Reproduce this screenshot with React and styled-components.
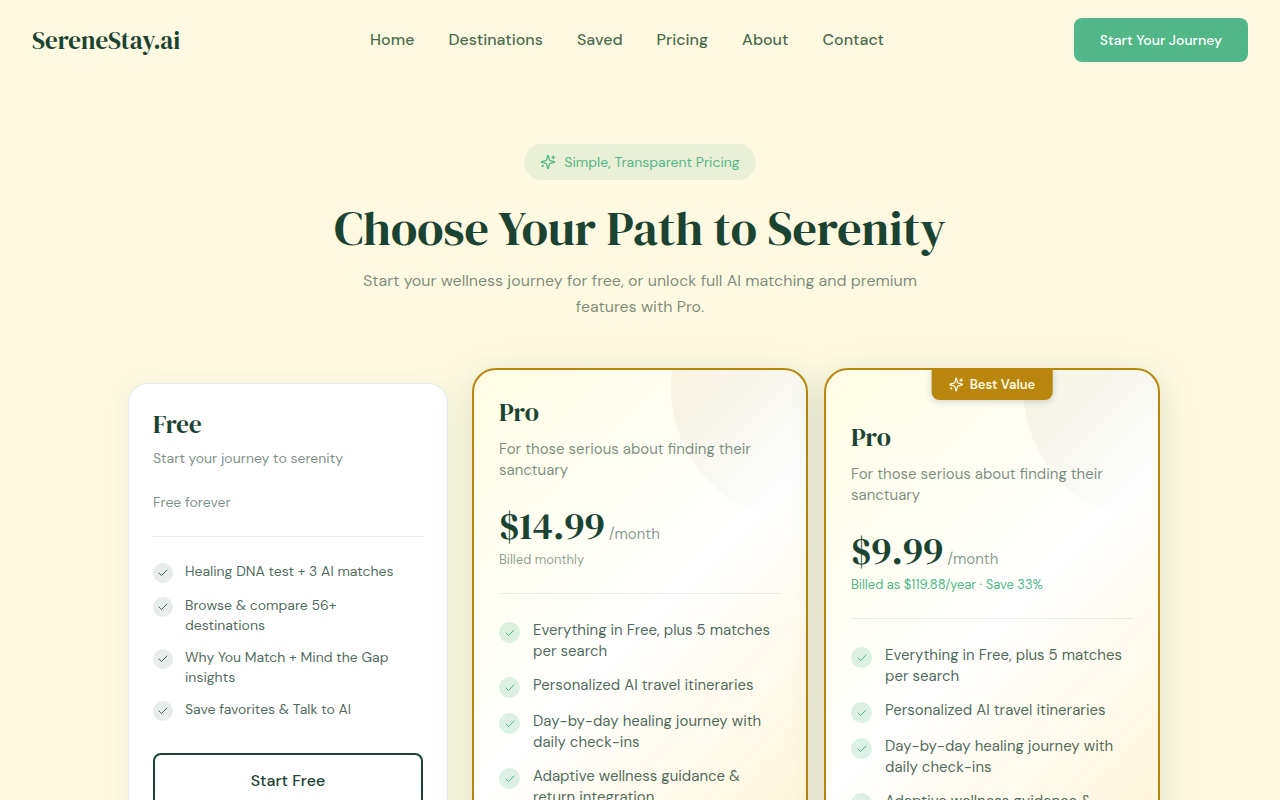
import React from 'react';
import styled, { createGlobalStyle, css } from 'styled-components';
import { Check } from 'lucide-react';

const sans = `'DM Sans', Inter, 'Open Sans', sans-serif`;
const serif = `'DM Serif Display', 'Liberation Serif', serif`;

const GlobalStyle = createGlobalStyle`
  *, *::before, *::after {
    box-sizing: border-box;
  }
  body {
    margin: 0;
    background: #fff9e1;
    color: #1b4332;
    font-family: ${sans};
    font-size: 16px;
  }
`;

const Header = styled.header`
  display: flex;
  align-items: center;
  justify-content: space-between;
  height: 80px;
  padding: 0 32px;
`;

const Logo = styled.a`
  color: #1b4332;
  font-family: ${serif};
  font-size: 25px;
  line-height: 32px;
  text-decoration: none;
`;

const Nav = styled.nav`
  display: flex;
  gap: 34px;
`;

const NavLink = styled.a`
  color: rgba(27, 73, 42, 0.82);
  font-weight: 500;
  line-height: 24px;
  text-decoration: none;
`;

const HeaderButton = styled.button`
  height: 44px;
  padding: 0 26px;
  border: 0;
  border-radius: 8px;
  background: #52b788;
  color: #fff;
  font: 500 14px ${sans};
  cursor: pointer;
`;

const Main = styled.main`
  padding: 64px 32px;
`;

const Hero = styled.section`
  display: flex;
  flex-direction: column;
  align-items: center;
  margin-bottom: 63px;
  text-align: center;
`;

const Pill = styled.div`
  display: flex;
  align-items: center;
  gap: 8px;
  margin-bottom: 24px;
  padding: 8px 16px;
  border-radius: 18px;
  background: rgba(82, 183, 136, 0.12);
  color: #52b788;
  font-size: 14px;
  line-height: 20px;
`;

const Title = styled.h1`
  margin: 0 0 16px;
  font-family: ${serif};
  font-size: 48px;
  font-weight: 400;
  line-height: 48px;
`;

const Lead = styled.p`
  max-width: 576px;
  margin: 0;
  color: rgba(27, 67, 50, 0.6);
  font-size: 16px;
  line-height: 26px;
`;

const Plans = styled.section`
  display: grid;
  grid-template-columns: repeat(3, minmax(0, 1fr));
  gap: 32px;
  max-width: 1024px;
  margin: 0 auto;
`;

const Card = styled.article`
  padding: 24px;
  border: 1px solid rgba(27, 67, 50, 0.1);
  border-radius: 20px;
  background: #fff;
  box-shadow: 0 4px 24px rgba(82, 183, 136, 0.12);

  ${p =>
    p.$featured &&
    css`
      position: relative;
      overflow: hidden;
      margin: -15px -8px;
      padding: ${p.$badged ? '50px' : '25px'} 25px 24px;
      border: 2px solid #b8860b;
      border-radius: 24px;
      background: linear-gradient(135deg, #fffde4 0%, #fff 50%, #fff3d2 100%);
      box-shadow: 0 8px 36px rgba(45, 106, 79, 0.18);
    `}
`;

const Glow = styled.div`
  position: absolute;
  top: -116px;
  right: -133px;
  width: 268px;
  height: 268px;
  border-radius: 50%;
  background: linear-gradient(
    135deg,
    ${p => (p.$muted ? 'rgba(120, 105, 40, 0.1)' : 'rgba(184, 120, 40, 0.12)')},
    rgba(120, 105, 80, 0.04) 50%,
    rgba(120, 105, 80, 0) 70%
  );
`;

const Ribbon = styled.div`
  position: absolute;
  top: -1px;
  left: 50%;
  transform: translateX(-50%);
  display: flex;
  align-items: center;
  gap: 6px;
  height: 31px;
  padding: 0 17px;
  border-radius: 0 0 8px 8px;
  background: #b8860b;
  box-shadow: 0 2px 6px rgba(27, 67, 50, 0.2);
  color: #fff8e1;
  font-size: 13px;
  font-weight: 600;
  white-space: nowrap;
`;

const CardBody = styled.div`
  position: relative;
`;

const PlanName = styled.h2`
  margin: 0 0 ${p => (p.$featured ? '10px' : '8px')};
  font-family: ${serif};
  font-size: ${p => (p.$featured ? '26px' : '25px')};
  font-weight: 400;
  line-height: ${p => (p.$featured ? '34px' : '32px')};
`;

const Muted = styled.p`
  margin: 0 0 24px;
  color: rgba(27, 67, 50, 0.6);
  font-size: ${p => (p.$featured ? '15px' : '14px')};
  line-height: ${p => (p.$featured ? '21px' : '20px')};
`;

const Price = styled.div`
  display: flex;
  align-items: baseline;
  gap: 4px;
  height: 46px;
  color: rgba(27, 67, 50, 0.55);
  font-size: 15px;
  line-height: 42px;
`;

const Amount = styled.strong`
  color: #1b4332;
  font-family: ${serif};
  font-size: 38px;
  font-weight: 400;
`;

const Billing = styled.p`
  margin: 0 0 25px;
  color: ${p => (p.$saving ? '#52b788' : 'rgba(27, 67, 50, 0.5)')};
  font-size: 13px;
  line-height: 17px;
`;

const Divider = styled.hr`
  height: 1px;
  margin: 0;
  border: 0;
  background: rgba(27, 67, 50, 0.1);
`;

const Features = styled.ul`
  display: flex;
  flex-direction: column;
  gap: ${p => (p.$featured ? '13px' : '12px')};
  margin: 0;
  padding: ${p => (p.$featured ? '26px' : '24px')} 8px 32px 0;
  list-style: none;
`;

const Feature = styled.li`
  display: flex;
  align-items: flex-start;
  gap: ${p => (p.$featured ? '13px' : '12px')};
  color: rgba(27, 67, 50, 0.8);
  font-size: ${p => (p.$featured ? '15px' : '14px')};
  line-height: ${p => (p.$featured ? '21px' : '20px')};
`;

const Tick = styled.span`
  display: flex;
  flex: none;
  align-items: center;
  justify-content: center;
  width: ${p => (p.$featured ? '21px' : '20px')};
  height: ${p => (p.$featured ? '21px' : '20px')};
  margin-top: 2px;
  border-radius: 50%;
  background: ${p => (p.$featured ? 'rgba(82, 183, 136, 0.2)' : 'rgba(27, 67, 50, 0.1)')};
  color: ${p => (p.$featured ? '#52b788' : '#1b4332')};
`;

const PlanButton = styled.button`
  width: 100%;
  height: 54px;
  border: 2px solid #1b4332;
  border-radius: 8px;
  background: transparent;
  color: #1b4332;
  font: 500 16px ${sans};
  cursor: pointer;
`;

const links = ['Home', 'Destinations', 'Saved', 'Pricing', 'About', 'Contact'];

const freeFeatures = [
  'Healing DNA test + 3 AI matches',
  'Browse & compare 56+ destinations',
  'Why You Match + Mind the Gap insights',
  'Save favorites & Talk to AI'
];

const proFeatures = [
  'Everything in Free, plus 5 matches per search',
  'Personalized AI travel itineraries',
  'Day-by-day healing journey with daily check-ins',
  'Adaptive wellness guidance & return integration'
];

const Sparkles = ({ size }) => (
  <svg
    width={size}
    height={size}
    viewBox="0 0 24 24"
    fill="none"
    stroke="currentColor"
    strokeWidth="2"
    strokeLinecap="round"
    strokeLinejoin="round"
    aria-hidden="true"
  >
    <path d="M9.937 15.5A2 2 0 0 0 8.5 14.063l-6.135-1.582a.5.5 0 0 1 0-.962L8.5 9.936A2 2 0 0 0 9.937 8.5l1.582-6.135a.5.5 0 0 1 .963 0L14.063 8.5A2 2 0 0 0 15.5 9.937l6.135 1.581a.5.5 0 0 1 0 .964L15.5 14.063a2 2 0 0 0-1.437 1.437l-1.582 6.135a.5.5 0 0 1-.963 0z" />
    <path d="M20 3v4M22 5h-4M4 17v2M5 18H3" />
  </svg>
);

const FeatureList = ({ items, featured }) => (
  <Features $featured={featured}>
    {items.map(item => (
      <Feature key={item} $featured={featured}>
        <Tick $featured={featured}>
          <Check size={12} strokeWidth={featured ? 2 : 1.6} />
        </Tick>
        {item}
      </Feature>
    ))}
  </Features>
);

const ProCard = ({ price, billing, bestValue }) => (
  <Card $featured $badged={bestValue}>
    <Glow $muted={bestValue} />
    {bestValue && (
      <Ribbon>
        <Sparkles size={15} />
        Best Value
      </Ribbon>
    )}
    <CardBody>
      <PlanName $featured>Pro</PlanName>
      <Muted $featured>For those serious about finding their sanctuary</Muted>
      <Price>
        <Amount>{price}</Amount>
        <span>/month</span>
      </Price>
      <Billing $saving={bestValue}>{billing}</Billing>
      <Divider />
      <FeatureList items={proFeatures} featured />
    </CardBody>
  </Card>
);

export default function App() {
  return (
    <>
      <GlobalStyle />
      <Header>
        <Logo href="#">SereneStay.ai</Logo>
        <Nav>
          {links.map(link => (
            <NavLink key={link} href={`#${link.toLowerCase()}`}>
              {link}
            </NavLink>
          ))}
        </Nav>
        <HeaderButton type="button">Start Your Journey</HeaderButton>
      </Header>
      <Main>
        <Hero>
          <Pill>
            <Sparkles size={16} />
            Simple, Transparent Pricing
          </Pill>
          <Title>Choose Your Path to Serenity</Title>
          <Lead>
            Start your wellness journey for free, or unlock full AI matching and
            premium features with Pro.
          </Lead>
        </Hero>
        <Plans>
          <Card>
            <PlanName>Free</PlanName>
            <Muted>Start your journey to serenity</Muted>
            <Muted>Free forever</Muted>
            <Divider />
            <FeatureList items={freeFeatures} />
            <PlanButton type="button">Start Free</PlanButton>
          </Card>
          <ProCard price="$14.99" billing="Billed monthly" />
          <ProCard
            price="$9.99"
            billing="Billed as $119.88/year · Save 33%"
            bestValue
          />
        </Plans>
      </Main>
    </>
  );
}
